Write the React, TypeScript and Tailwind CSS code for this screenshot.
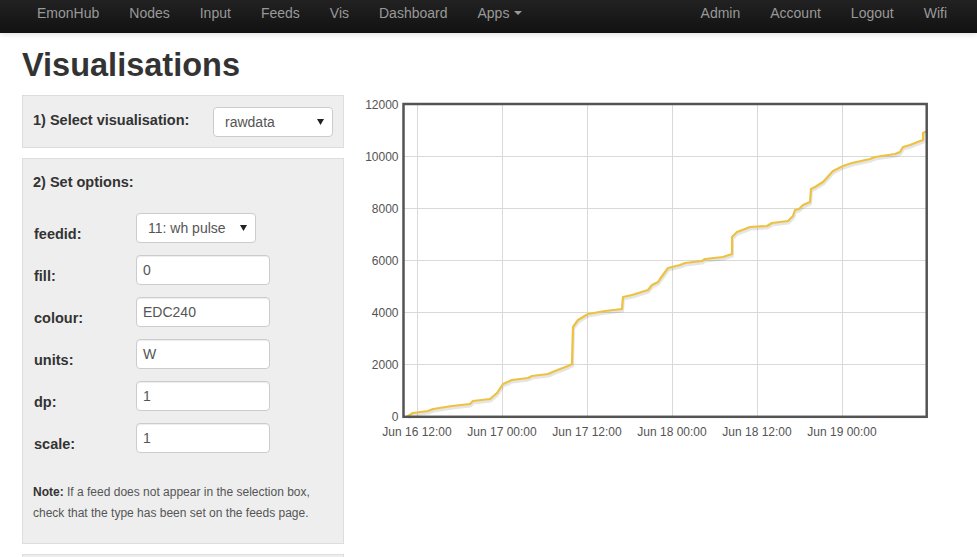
import React from "react";

const navLeft = ["EmonHub", "Nodes", "Input", "Feeds", "Vis", "Dashboard"];
const navRight = ["Admin", "Account", "Logout", "Wifi"];

const pts: [number, number][] = [
  [408, 416], [413, 413], [428, 411], [433, 409], [452, 406], [470, 404], [473, 401],
  [490, 399], [497, 393], [503, 384], [512, 380], [528, 378], [532, 376], [548, 374],
  [555, 371], [568, 366], [572, 364], [573, 327], [578, 320], [588, 314], [605, 311],
  [622, 309], [623, 297], [632, 295], [648, 290], [652, 285], [658, 282], [660, 279],
  [668, 268], [680, 265], [685, 263], [702, 261], [705, 259], [723, 257], [732, 254],
  [732, 237], [737, 232], [745, 229], [750, 227], [767, 226], [772, 223], [788, 221],
  [793, 216], [795, 210], [799, 209], [803, 205], [810, 202], [811, 189], [815, 187],
  [823, 182], [833, 171], [843, 166], [852, 163], [870, 159], [875, 157], [895, 154],
  [900, 152], [903, 147], [910, 145], [915, 143], [923, 140], [923, 133], [925, 132],
];

const yTicks = [
  { v: "12000", y: 104 },
  { v: "10000", y: 156 },
  { v: "8000", y: 208 },
  { v: "6000", y: 260 },
  { v: "4000", y: 312 },
  { v: "2000", y: 364 },
  { v: "0", y: 416 },
];
const xTicks = [
  { l: "Jun 16 12:00", x: 417 },
  { l: "Jun 17 00:00", x: 502 },
  { l: "Jun 17 12:00", x: 587 },
  { l: "Jun 18 00:00", x: 672 },
  { l: "Jun 18 12:00", x: 757 },
  { l: "Jun 19 00:00", x: 842 },
];

function Caret() {
  return (
    <svg width="7" height="6" viewBox="0 0 7 6" className="shrink-0">
      <polygon points="0,0 7,0 3.5,6" fill="#222" />
    </svg>
  );
}

function FakeSelect({ value, width }: { value: string; width: string }) {
  return (
    <div
      className={`${width} h-[30px] flex items-center justify-between pl-[11px] pr-[8px] bg-white border border-[#ccc] rounded-[4px] text-[14px] leading-[20px] text-[#555]`}
    >
      <span>{value}</span>
      <Caret />
    </div>
  );
}

function Input({ value }: { value: string }) {
  return (
    <div className="w-[134px] h-[30px] flex items-center px-[6px] bg-white border border-[#ccc] rounded-[4px] shadow-[inset_0_1px_1px_rgba(0,0,0,0.075)] text-[14px] leading-[20px] text-[#555]">
      {value}
    </div>
  );
}

function Chart() {
  const d = pts.map((p, i) => `${i === 0 ? "M" : "L"}${p[0]},${p[1]}`).join(" ");
  return (
    <svg width="580" height="350" viewBox="360 95 580 350" className="shrink-0 block">
      {yTicks.slice(1, 6).map((t) => (
        <line key={t.v} x1={403.5} x2={926.7} y1={t.y + 0.5} y2={t.y + 0.5} stroke="#d9d9d9" strokeWidth="1" />
      ))}
      {xTicks.map((t) => (
        <line key={t.l} x1={t.x + 0.5} x2={t.x + 0.5} y1={104} y2={416.8} stroke="#d9d9d9" strokeWidth="1" />
      ))}
      <path d={d} fill="none" stroke="rgba(0,0,0,0.1)" strokeWidth="3" strokeLinejoin="round" transform="translate(0.5,2)" />
      <path d={d} fill="none" stroke="#EDC240" strokeWidth="2.2" strokeLinejoin="round" strokeLinecap="round" />
      <rect x={403.5} y={104} width={523.2} height={312.8} fill="none" stroke="#545454" strokeWidth="2.5" />
      <g fontFamily="'Liberation Sans', Arial, sans-serif" fontSize="12" fill="#545454">
        {yTicks.map((t) => (
          <text key={t.v} x={398.5} y={t.y + 4.5} textAnchor="end">
            {t.v}
          </text>
        ))}
        {xTicks.map((t) => (
          <text key={t.l} x={t.x} y={436} textAnchor="middle">
            {t.l}
          </text>
        ))}
      </g>
    </svg>
  );
}

export default function App() {
  const rows: { label: string; value: string; select?: boolean }[] = [
    { label: "feedid:", value: "11: wh pulse", select: true },
    { label: "fill:", value: "0" },
    { label: "colour:", value: "EDC240" },
    { label: "units:", value: "W" },
    { label: "dp:", value: "1" },
    { label: "scale:", value: "1" },
  ];
  return (
    <div className="w-[977px] bg-white text-[#333] font-['Liberation_Sans',Arial,sans-serif]">
      <div className="h-[33px] flex bg-gradient-to-b from-[#222] to-[#111] pl-[22px] pr-[15px] shadow-[0_1px_6px_rgba(0,0,0,0.15)] text-[14px] text-[#999]">
        {navLeft.map((n) => (
          <div key={n} className="px-[15px] pt-[3px] leading-[20px]">
            {n}
          </div>
        ))}
        <div className="px-[15px] pt-[3px] leading-[20px] flex items-start">
          <span>Apps</span>
          <span className="inline-block w-0 h-0 mt-[8px] ml-[5px] border-t-[4px] border-x-[4px] border-x-transparent border-t-[#999]" />
        </div>
        <div className="ml-auto flex">
          {navRight.map((n) => (
            <div key={n} className="px-[15px] pt-[3px] leading-[20px]">
              {n}
            </div>
          ))}
        </div>
      </div>

      <div className="px-[22px]">
        <h2 className="mt-[12px] mb-[10px] text-[32.5px] leading-[40px] font-bold text-[#333]">Visualisations</h2>
        <div className="flex items-start gap-[16px]">
          <div className="w-[322px] shrink-0 flex flex-col gap-[10px]">
            <div className="bg-[#eee] border border-[#ddd] pt-[11px] pb-[10px] pl-[10px] pr-[10px] flex justify-between items-start">
              <div className="mt-[3px] text-[14.5px] leading-[20px] font-bold text-[#333]">1) Select visualisation:</div>
              <FakeSelect value="rawdata" width="w-[120px]" />
            </div>
            <div className="bg-[#eee] border border-[#ddd] pt-[13px] pb-[19px] pl-[10px] pr-[10px]">
              <div className="text-[14.5px] leading-[20px] font-bold text-[#333]">2) Set options:</div>
              <div className="mt-[21px] flex flex-col">
                {rows.map((r) => (
                  <div key={r.label} className="h-[42px] flex items-start">
                    <div className="w-[103px] self-center pl-[1px] text-[14.5px] leading-[20px] font-bold text-[#333]">{r.label}</div>
                    {r.select ? <FakeSelect value={r.value} width="w-[120px]" /> : <Input value={r.value} />}
                  </div>
                ))}
              </div>
              <p className="mt-[17px] text-[12px] leading-[21px] text-[#555]">
                <b className="text-[#333]">Note:</b> If a feed does not appear in the selection box, check that the type has been set on the feeds page.
              </p>
            </div>
            <div className="bg-[#eee] border border-[#ddd] h-[60px]" />
          </div>
          <Chart />
        </div>
      </div>
    </div>
  );
}
